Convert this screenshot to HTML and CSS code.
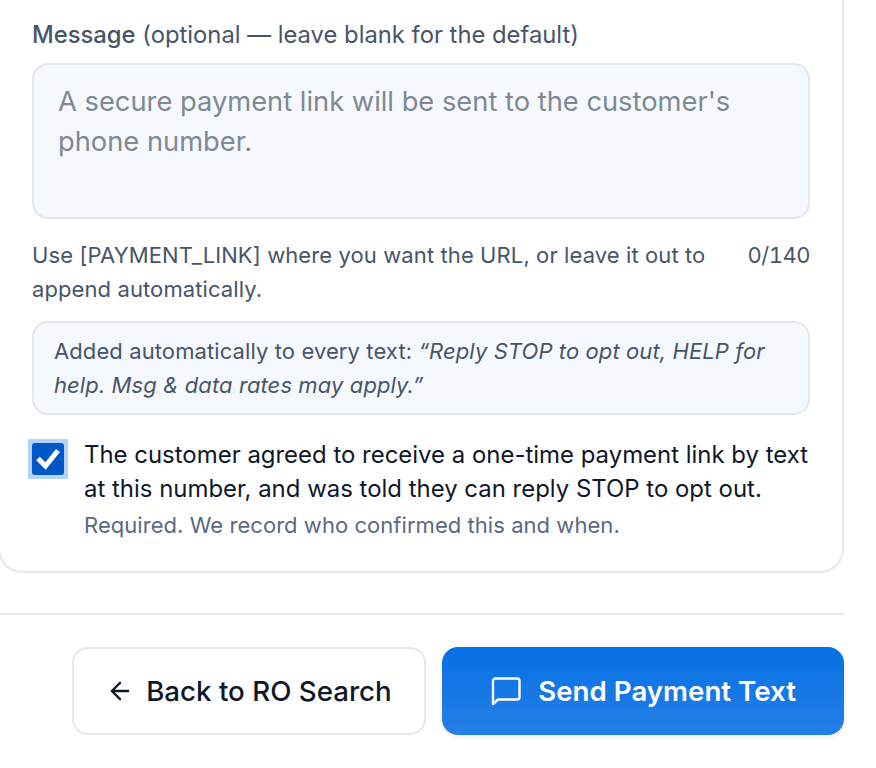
FILE: index.html
```html
<!DOCTYPE html>
<html>

<head>
    <meta charset="utf-8">
    <title>Send Payment Text</title>
    <meta name="viewport" content="width=device-width, initial-scale=1">
    <link rel="stylesheet" href="styles.css">
</head>

<body>
    <div class="page">
        <section class="card">
            <label class="field-label"><b>Message</b> (optional — leave blank for the default)</label>
            <textarea class="message" rows="3" placeholder="A secure payment link will be sent to the customer's phone number."></textarea>

            <div class="hint-row">
                <p class="hint">Use [PAYMENT_LINK] where you want the URL, or leave it out to append automatically.</p>
                <span class="counter">0/140</span>
            </div>

            <div class="notice">Added automatically to every text: <em>“Reply STOP to opt out, HELP for help. Msg &amp; data rates may apply.”</em></div>

            <div class="consent">
                <span class="checkbox-ring">
                    <span class="checkbox">
                        <svg viewBox="0 0 32 32" width="32" height="32">
                            <path d="M6 15.500l7.500 7.500L26 7.500" fill="none" stroke="#fff" stroke-width="5"/>
                        </svg>
                    </span>
                </span>
                <div>
                    <p class="consent-text">The customer agreed to receive a one-time payment link by text at this number, and was told they can reply STOP to opt out.</p>
                    <p class="consent-note">Required. We record who confirmed this and when.</p>
                </div>
            </div>
        </section>

        <div class="actions">
            <button class="btn btn-back">
                <svg viewBox="0 0 24 24" width="28" height="28" fill="none" stroke="currentColor" stroke-width="2" stroke-linecap="round" stroke-linejoin="round">
                    <path d="M19 12H5M12 19l-7-7 7-7"/>
                </svg>
                Back to RO Search
            </button>
            <button class="btn btn-send">
                <svg viewBox="0 0 32 32" width="32" height="32" fill="none" stroke="currentColor" stroke-width="2.400" stroke-linejoin="round">
                    <path d="M3 29V6a2.500 2.500 0 0 1 2.500-2.500h21.500a2.500 2.500 0 0 1 2.500 2.500v16a2.500 2.500 0 0 1-2.500 2.500H8z"/>
                </svg>
                Send Payment Text
            </button>
        </div>
    </div>
</body>

</html>
```

FILE: styles.css
```css
* {
    box-sizing: border-box;
}

html, body {
    margin: 0;
    height: 768px;
    overflow: hidden;
    background: #fff;
}

body {
    font-family: Inter, "Noto Sans", sans-serif;
    color: #0f172a;
}

p {
    margin: 0;
}

/* the page is scrolled, the card starts above the window */
.page {
    width: 846px;
    margin: -63px 0 0 -2px;
}

.card {
    border: 2px solid #e2e8f0;
    border-radius: 24px;
    background: #fff;
    padding: 80px 32px 31px;
}

.field-label {
    display: block;
    font-size: 23.8px;
    line-height: 32px;
    color: #475569;
    margin-bottom: 12px;
}

.field-label b {
    font-weight: 500;
}

.message {
    display: block;
    width: 100%;
    height: 156px;
    padding: 17px 24px 15px;
    border: 2px solid #e2e8f0;
    border-radius: 16px;
    background: #f5f8fc;
    font-family: inherit;
    font-size: 27.3px;
    line-height: 40px;
    resize: none;
}

.message::placeholder {
    color: #7f8994;
    opacity: 1;
}

.hint-row {
    display: flex;
    justify-content: space-between;
    gap: 32px;
    margin-top: 19px;
    font-size: 22px;
    letter-spacing: 0.1px;
    line-height: 34px;
    color: #475569;
}

.counter {
    font-variant-numeric: tabular-nums;
    letter-spacing: -0.5px;
}

.notice {
    margin-top: 15px;
    padding: 11px 20px;
    border: 2px solid #e2e8f0;
    border-radius: 16px;
    background: #f5f8fc;
    font-size: 22px;
    letter-spacing: 0.1px;
    line-height: 34px;
    color: #475569;
}

.consent {
    display: flex;
    gap: 16px;
    margin-top: 23px;
}

.checkbox-ring {
    flex: none;
    width: 40px;
    height: 40px;
    margin: 1px 0 0 -4px;
    padding: 4px;
    background: #b3d4f8;
}

.checkbox {
    display: block;
    height: 32px;
    border-radius: 3px;
    background: #0057c8;
}

.checkbox svg {
    display: block;
}

.consent-text {
    font-size: 23.95px;
    line-height: 34px;
}

.consent-note {
    margin-top: 4px;
    font-size: 22px;
    letter-spacing: 0.05px;
    line-height: 30px;
    color: #5b6980;
}

.actions {
    display: flex;
    justify-content: flex-end;
    gap: 16px;
    margin-top: 40px;
    padding-top: 32px;
    border-top: 2px solid #e2e8f0;
}

.btn {
    display: flex;
    align-items: center;
    height: 88px;
    border-radius: 16px;
    font-family: inherit;
    font-size: 27.7px;
    white-space: nowrap;
}

.btn-back {
    gap: 12px;
    padding: 0 32.500px;
    border: 2px solid #e2e8f0;
    background: #fff;
    color: #0f172a;
    font-weight: 500;
}

.btn-send {
    gap: 16px;
    padding: 0 48px;
    border: none;
    background: linear-gradient(#0670e4, #2680e6);
    color: #fff;
    font-weight: 600;
    box-shadow: 0 2px 6px rgba(15, 23, 42, 0.08);
}
```
